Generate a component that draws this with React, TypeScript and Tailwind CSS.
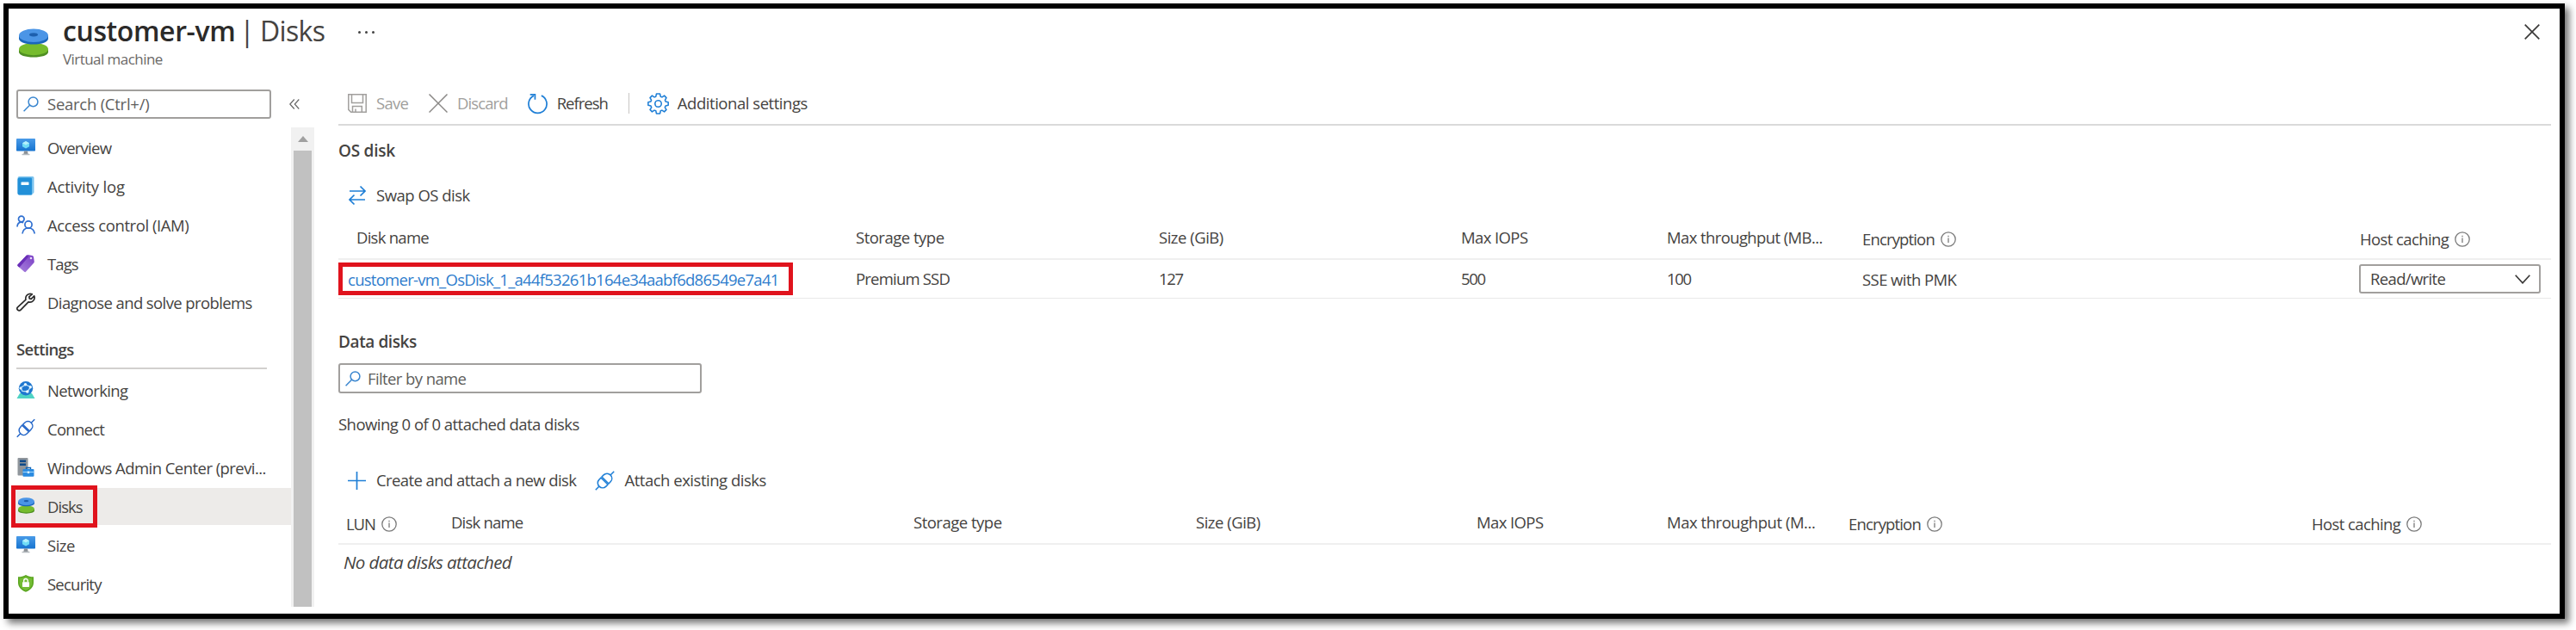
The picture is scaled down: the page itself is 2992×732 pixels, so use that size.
import type { ReactNode } from "react";

const T = ({ c = "", children }: { c?: string; children: ReactNode }) => (
  <span className={`whitespace-nowrap ${c}`}>{children}</span>
);

const DisksIcon = ({ c }: { c: string }) => (
  <svg viewBox="0 0 34 34" className={c} fill="none">
    <path d="M0 24.5v3C0 31.200 7.600 33.500 17 33.500s17-2.300 17-6v-3z" fill="#4f8f22" />
    <ellipse cx="17" cy="24" rx="17" ry="7.200" fill="#76bc2d" />
    <path d="M0 8.500v3.500c0 3.800 7.600 6.500 17 6.500s17-2.700 17-6.500V8.500z" fill="#1a66bb" />
    <ellipse cx="17" cy="8.300" rx="17" ry="7.800" fill="#4b95e6" />
    <ellipse cx="17" cy="7.300" rx="5" ry="2.100" fill="#1d5fae" />
  </svg>
);

const MonitorIcon = () => (
  <svg viewBox="0 0 22 20" className="h-5 w-[22px]">
    <defs>
      <linearGradient id="mon" x1="0" y1="0" x2="0" y2="1">
        <stop offset="0" stopColor="#4a9be8" />
        <stop offset="1" stopColor="#1673cf" />
      </linearGradient>
    </defs>
    <rect width="22" height="14.500" rx="0.800" fill="url(#mon)" />
    <path d="M9 14.500h4l.6 3.500H8.400z" fill="#8b9096" />
    <rect x="6.500" y="17.700" width="9" height="1.500" rx="0.500" fill="#b5babf" />
    <path d="M11 3l4 2.200v4L11 11.500 7 9.200v-4z" fill="#6fdcf6" />
    <path d="M11 3l4 2.200L11 7.400 7 5.200z" fill="#b5f0fc" />
  </svg>
);

const LogIcon = () => (
  <svg viewBox="0 0 20 22" className="h-[22px] w-5">
    <path d="M2.500 0H18a1.500 1.500 0 0 1 1.500 1.500v17L17 21.500H2.500A2 2 0 0 1 .5 19.500V2a2 2 0 0 1 2-2z" fill="#7cc3ee" />
    <path d="M2.500 1.500H16a1 1 0 0 1 1 1V20.500a1 1 0 0 1-1 1H2.500a2 2 0 0 1-2-2V3.500a2 2 0 0 1 2-2z" fill="#2290d8" />
    <rect x="4.500" y="6.500" width="9" height="3.500" rx="0.600" fill="#f2fbff" />
  </svg>
);

const PeopleIcon = () => (
  <svg viewBox="0 0 22 22" className="h-[22px] w-[22px]" fill="none" stroke="#2f6fd0" strokeWidth="1.700">
    <circle cx="5.800" cy="4.500" r="3.300" />
    <path d="M1 13.500c.2-3.400 2-5.300 4.800-5.300 1 0 1.600.2 2.300.6" />
    <circle cx="14" cy="11" r="4.100" />
    <path d="M7 21.500c.5-4 3-6.500 7-6.500s6.700 2.500 7.200 6.500" />
  </svg>
);

const TagIcon = () => (
  <svg viewBox="0 0 20 22" className="h-[22px] w-5">
    <defs>
      <linearGradient id="tag" x1="1" y1="0" x2="0" y2="1">
        <stop offset="0" stopColor="#7a3fc4" />
        <stop offset="1" stopColor="#a983de" />
      </linearGradient>
    </defs>
    <path d="M11 1.600c.4-.4 1-.6 1.500-.6L17.500 2A2 2 0 0 1 19 3.500l.8 5.300c.1.600-.1 1.200-.5 1.600L10.200 20.600a1.400 1.400 0 0 1-2 .1L.8 14.300a1.400 1.400 0 0 1-.1-2z" fill="url(#tag)" />
    <path d="M11 1.600L.7 12.300a1.400 1.400 0 0 0 .1 2l1.700 1.500L13.500 3z" fill="#6a2fb8" />
    <circle cx="16" cy="5" r="1.300" fill="#e9dcfa" />
  </svg>
);

const WrenchIcon = () => (
  <svg viewBox="0 0 22 22" className="h-[22px] w-[22px]" fill="none" stroke="#2b2b2b" strokeWidth="1.700" strokeLinejoin="round">
    <path d="M18.300 1.800a5.400 5.400 0 0 0-7.300 6.400L1.600 16.800a2.400 2.400 0 0 0 3.400 3.400l9-9.300a5.400 5.400 0 0 0 6.700-7.100l-3.500 3.500-2-.4-.4-2z" />
  </svg>
);

const NetIcon = () => (
  <svg viewBox="0 0 22 20" className="h-5 w-[22px]">
    <path d="M4 14h14l3.500 6H.5z" fill="#4fd3c4" />
    <circle cx="11" cy="8.200" r="8.200" fill="#1f77cf" />
    <path d="M5 7.500L10.500 4l6 2.500-3.500 5.500-6-.5z" fill="none" stroke="#bfe4fb" strokeWidth="1.300" />
    <circle cx="10.500" cy="3.800" r="1.700" fill="#e8f7ff" />
    <circle cx="5" cy="8" r="1.600" fill="#e8f7ff" />
    <circle cx="16.300" cy="6.800" r="1.700" fill="#e8f7ff" />
    <circle cx="12.800" cy="12" r="1.800" fill="#e8f7ff" />
  </svg>
);

const PlugIcon = ({ s }: { s: string }) => (
  <svg viewBox="0 0 24 24" className="h-[23px] w-[23px]" fill="none" stroke={s} strokeWidth="1.600" strokeLinejoin="round">
    <path d="M.8 23.200l4.400-4.400M18.800 5.200L23.200.8" />
    <path d="M7.300 8.300l8.400 8.400-2.200 2.200c-2.500 2.500-6 2.300-8.300 0s-2.500-5.800 0-8.300z" />
    <path d="M16.700 15.700L8.300 7.300l2.200-2.200c2.500-2.500 6-2.300 8.300 0s2.500 5.800 0 8.300z" />
  </svg>
);

const AdminIcon = () => (
  <svg viewBox="0 0 20 22" className="h-[22px] w-5">
    <rect x="0.500" y="0" width="12" height="20.500" rx="1" fill="#8f959b" />
    <rect x="3" y="2.500" width="7" height="2.500" fill="#0f4a8a" />
    <rect x="3" y="6.500" width="7" height="2.500" fill="#0f4a8a" />
    <path d="M10.500 13v-1.500h5V13" fill="none" stroke="#1565b5" strokeWidth="1.400" />
    <rect x="6.500" y="13" width="13" height="8.800" rx="1" fill="#2a8ae0" />
    <path d="M6.500 16.500h13" stroke="#9ad2fa" strokeWidth="1.200" />
    <rect x="11.800" y="15.500" width="2.400" height="2.600" fill="#d6efff" />
  </svg>
);

const ShieldIcon = () => (
  <svg viewBox="0 0 18 20" className="h-5 w-[18px]">
    <path d="M9 0c2.500 1.700 5.300 2.300 9 2.300V9c0 5-3.700 8.600-9 10.800C3.700 17.600 0 14 0 9V2.300C3.700 2.300 6.500 1.700 9 0z" fill="#5aa51f" />
    <path d="M9 1.800c2.200 1.300 4.600 1.900 7.500 2V9c0 4-2.800 7-7.500 9.200C4.300 16 1.500 13 1.500 9V3.800c2.900-.1 5.300-.7 7.500-2z" fill="#74bd35" />
    <path d="M6.700 8.500V6.800a2.300 2.300 0 0 1 4.600 0v1.700" fill="none" stroke="#fff" strokeWidth="1.400" />
    <rect x="5" y="8.200" width="8" height="5.800" rx="0.700" fill="#fff" />
  </svg>
);

const SearchIcon = () => (
  <svg viewBox="0 0 18 18" className="h-[18px] w-[18px] shrink-0" fill="none" stroke="#3a86cf" strokeWidth="1.500">
    <circle cx="11.500" cy="6.300" r="5.400" />
    <path d="M7.500 10.300L.6 17.300" />
  </svg>
);

const Info = () => (
  <svg viewBox="0 0 18 18" className="h-[18px] w-[18px] shrink-0" fill="none" stroke="#7a7a7a">
    <circle cx="9" cy="9" r="8.200" strokeWidth="1.300" />
    <path d="M9 7.500v5.500M9 4.800v1.500" strokeWidth="1.300" />
  </svg>
);

const Item = ({ icon, label, c, sel }: { icon: ReactNode; label: string; c: string; sel?: boolean }) => (
  <div className={`flex h-[45px] w-[328px] items-center py-[1px] pl-[3px] ${sel ? "relative" : ""}`}>
    <div className={`flex h-[43px] w-full items-center pl-[6px] ${sel ? "bg-[#edebe9]" : ""}`}>
      <span className="mb-[2px] flex w-[22px] justify-center">{icon}</span>
      <T c={`ml-[14px] ${c}`}>{label}</T>
    </div>
    {sel && <div className="absolute top-[-2px] left-[3px] h-[49px] w-[100px] border-[5px] border-[#e0131d]" />}
  </div>
);

const Hd = ({ c, children }: { c: string; children: ReactNode }) => (
  <div className="flex items-center gap-[7px] pt-[4px]">
    <T c={c}>{children}</T>
    <Info />
  </div>
);

export default function App() {
  return (
    <div className="h-[732px] w-[2992px] overflow-hidden bg-white p-1 font-['Open_Sans','Noto_Sans',sans-serif] text-[18.5px] leading-[30px] text-[#454341]">
      <div className="flex h-[715px] w-[2975px] flex-col border-[6px] border-black bg-white shadow-[5px_5px_8px_rgba(0,0,0,0.55)]">
        <header className="flex h-[88px] shrink-0 items-start pt-[3px] pr-[23px] pl-3">
          <DisksIcon c="mt-5 h-[34px] w-[34px]" />
          <div className="ml-[17px] flex flex-col">
            <div className="flex h-11 items-center pt-[1px] text-[32px] leading-[44px]">
              <T c="font-semibold tracking-[-0.4px] text-[#2b2a29]">customer-vm</T>
              <T c="ml-[5px]">|</T>
              <T c="ml-[6px] tracking-[-0.6px]">Disks</T>
              <span className="mt-[4px] ml-[38px] flex gap-[5px]">
                <i className="h-[3px] w-[3px] rounded-full bg-[#444]" />
                <i className="h-[3px] w-[3px] rounded-full bg-[#444]" />
                <i className="h-[3px] w-[3px] rounded-full bg-[#444]" />
              </span>
            </div>
            <T c="text-[17px] leading-[24px] tracking-[-0.55px] text-[#6b6967]">Virtual machine</T>
          </div>
          <svg viewBox="0 0 18 18" className="mt-[15px] ml-auto h-[18px] w-[18px]" stroke="#3b3a39" strokeWidth="1.700">
            <path d="M.7.7l16.600 16.600M17.300.7L.7 17.300" />
          </svg>
        </header>

        <div className="flex flex-1">
          <aside className="w-[355px] shrink-0">
            <div className="flex h-[50px] items-start pt-[6px] pl-[9px]">
              <div className="flex h-[34px] w-[296px] items-center rounded-[3px] border-2 border-[#a19f9d] pl-[6px] text-[#605e5c]">
                <SearchIcon />
                <T c="ml-[10px] tracking-[-0.25px]">Search (Ctrl+/)</T>
              </div>
              <svg viewBox="0 0 12 12" className="mt-[11px] ml-[21px] h-3 w-3" fill="none" stroke="#666" strokeWidth="1.200">
                <path d="M5.800.5L.8 6l5 5.500M11.300.5l-5 5.500 5 5.500" />
              </svg>
            </div>
            <div className="flex">
              <nav className="h-[565px] w-[328px] pt-[1px]">
                <Item icon={<MonitorIcon />} label="Overview" c="tracking-[-0.74px]" />
                <Item icon={<LogIcon />} label="Activity log" c="tracking-[-0.21px]" />
                <Item icon={<PeopleIcon />} label="Access control (IAM)" c="tracking-[-0.42px]" />
                <Item icon={<TagIcon />} label="Tags" c="tracking-[-0.9px]" />
                <Item icon={<WrenchIcon />} label="Diagnose and solve problems" c="tracking-[-0.6px]" />
                <div className="flex h-[57px] flex-col pt-[17px] pl-[9px]">
                  <T c="h-[38px] w-[291px] border-b-2 border-[#d2d0ce] font-semibold tracking-[-0.63px]">Settings</T>
                </div>
                <Item icon={<NetIcon />} label="Networking" c="tracking-[-0.63px]" />
                <Item icon={<PlugIcon s="#2567c9" />} label="Connect" c="tracking-[-0.73px]" />
                <Item icon={<AdminIcon />} label="Windows Admin Center (previ..." c="tracking-[-0.55px]" />
                <Item icon={<DisksIcon c="h-[19px] w-[19px]" />} label="Disks" c="tracking-[-0.95px]" sel />
                <Item icon={<MonitorIcon />} label="Size" c="tracking-[-0.5px]" />
                <Item icon={<ShieldIcon />} label="Security" c="tracking-[-0.77px]" />
              </nav>
              <div className="flex h-[557px] w-[27px] flex-col items-center bg-[#f1f1f1]">
                <svg viewBox="0 0 12 7" className="my-[10px] h-[7px] w-3 shrink-0">
                  <path d="M6 0l6 7H0z" fill="#a0a0a0" />
                </svg>
                <div className="w-[21px] flex-1 bg-[#c1c1c1]" />
              </div>
            </div>
          </aside>

          <main className="ml-7 w-[2570px]">
            <div className="flex h-12 items-center border-b-2 border-[#dadada] pb-[2px] pl-[11px]">
              <svg viewBox="0 0 22 22" className="h-[22px] w-[22px]" fill="none" stroke="#a19f9d" strokeWidth="1.500">
                <path d="M.8.8h20.400v20.400H3.600L.8 18.400zM4.500.8v9.700h13V.8M5.500 21v-6.500h10.800V21M9 21v-3.500" />
              </svg>
              <T c="ml-[11px] tracking-[-0.75px] text-[#a19f9d]">Save</T>
              <svg viewBox="0 0 22 22" className="ml-[24px] h-[22px] w-[22px]" stroke="#8a8886" strokeWidth="1.500">
                <path d="M.5.500l21 21M21.500.5l-21 21" />
              </svg>
              <T c="ml-[11px] tracking-[-0.9px] text-[#a19f9d]">Discard</T>
              <svg viewBox="0 0 24 26" className="ml-[23px] h-[25px] w-[23px]" fill="none" stroke="#1f7fd6" strokeWidth="1.800">
                <path d="M16.500 3.200A11 11 0 1 1 7.300 3.300" />
                <path d="M2.800 2h6v6" />
              </svg>
              <T c="ml-[11px] tracking-[-1px]">Refresh</T>
              <div className="ml-[24px] h-6 w-px bg-[#c8c6c4]" />
              <svg viewBox="0 0 24 24" className="ml-[21px] h-[25px] w-[25px]" fill="none" stroke="#1f7fd6" strokeWidth="1.500" strokeLinejoin="round">
                <circle cx="12" cy="12" r="3.600" />
                <path d="M10 1h4l.6 3 1.700.7 2.500-1.700 2.300 2.400-1.500 2.600.6 1.700 3 .6v3.400l-3 .7-.7 1.800 1.600 2.400-2.300 2.400-2.600-1.700-1.600.7L14 23h-4l-.6-3-1.700-.7L5.200 21l-2.300-2.400 1.600-2.400-.7-1.800-3-.7v-3.400l3-.6.6-1.700L2.900 5.400 5.200 3l2.500 1.700L9.400 4z" />
              </svg>
              <T c="ml-[10px] tracking-[-0.46px]">Additional settings</T>
            </div>

            <div className="flex h-[57px] items-center">
              <T c="text-[19px] font-semibold tracking-[-0.25px]">OS disk</T>
            </div>
            <div className="flex h-12 items-center pl-3">
              <svg viewBox="0 0 20 24" className="h-6 w-5" fill="none" stroke="#1f7fd6" strokeWidth="1.700">
                <path d="M1 7h18M13.500 1.500L19 7l-5.500 5.500M19 17H1M6.500 11.500L1 17l5.500 5.500" />
              </svg>
              <T c="ml-3 tracking-[-0.5px]">Swap OS disk</T>
            </div>
            <div className="grid h-[51px] grid-cols-[601px_352px_351px_239px_227px_578px_221px] items-center border-b-2 border-[#efefef]">
              <T c="ml-[21px] tracking-[-0.74px]">Disk name</T>
              <T c="tracking-[-0.5px]">Storage type</T>
              <T c="tracking-[-0.49px]">Size (GiB)</T>
              <T c="tracking-[-0.6px]">Max IOPS</T>
              <T c="tracking-[-0.61px]">Max throughput (MB...</T>
              <Hd c="tracking-[-0.85px]">Encryption</Hd>
              <Hd c="tracking-[-0.6px]">Host caching</Hd>
            </div>
            <div className="grid h-[45px] grid-cols-[601px_352px_351px_239px_227px_577px_222px] items-center border-b border-[#e8e8e8]">
              <div className="flex h-[38px] w-[528px] items-center border-[5px] border-[#e0131d] pt-[1px] pl-[6px]">
                <T c="tracking-[-0.73px] text-[#2f7dcd]">customer-vm_OsDisk_1_a44f53261b164e34aabf6d86549e7a41</T>
              </div>
              <T c="pb-[1px] tracking-[-0.8px]">Premium SSD</T>
              <T c="pb-[1px] tracking-[-1.3px]">127</T>
              <T c="pb-[1px] tracking-[-1.3px]">500</T>
              <T c="pb-[1px] tracking-[-1.3px]">100</T>
              <T c="pt-[2px] tracking-[-0.58px]">SSE with PMK</T>
              <div className="flex h-[34px] w-[211px] items-center justify-between rounded-[3px] border-2 border-[#a19f9d] pr-[10px] pl-[11px]">
                <T c="tracking-[-0.65px]">Read/write</T>
                <svg viewBox="0 0 18 11" className="h-[11px] w-[18px]" fill="none" stroke="#3b3a39" strokeWidth="1.700">
                  <path d="M.7.700L9 9.800 17.300.7" />
                </svg>
              </div>
            </div>

            <div className="mt-[35px] flex h-[30px] items-center">
              <T c="text-[19px] font-semibold tracking-[-0.4px]">Data disks</T>
            </div>
            <div className="mt-[10px] flex h-[35px] w-[422px] items-center rounded-[3px] border-2 border-[#a19f9d] pl-[6px] text-[#605e5c]">
              <SearchIcon />
              <T c="ml-[8px] tracking-[-0.6px]">Filter by name</T>
            </div>
            <div className="mt-[21px] flex h-[30px] items-center">
              <T c="tracking-[-0.53px]">Showing 0 of 0 attached data disks</T>
            </div>
            <div className="mt-[35px] flex h-[30px] items-center pl-[11px]">
              <svg viewBox="0 0 21 21" className="h-[21px] w-[21px]" stroke="#1f7fd6" strokeWidth="1.700">
                <path d="M10.500 0v21M0 10.500h21" />
              </svg>
              <T c="ml-3 tracking-[-0.58px]">Create and attach a new disk</T>
              <span className="ml-[22px]"><PlugIcon s="#1f7fd6" /></span>
              <T c="ml-[11px] tracking-[-0.48px]">Attach existing disks</T>
            </div>
            <div className="mt-[9px] grid h-[51px] grid-cols-[131px_537px_328px_326px_221px_211px_538px_278px] items-center border-b-2 border-[#efefef]">
              <div className="pl-[9px]"><Hd c="tracking-[-1.1px]">LUN</Hd></div>
              <T c="tracking-[-0.8px]">Disk name</T>
              <T c="tracking-[-0.5px]">Storage type</T>
              <T c="tracking-[-0.49px]">Size (GiB)</T>
              <T c="tracking-[-0.6px]">Max IOPS</T>
              <T c="tracking-[-0.46px]">Max throughput (M...</T>
              <Hd c="tracking-[-0.85px]">Encryption</Hd>
              <Hd c="tracking-[-0.6px]">Host caching</Hd>
            </div>
            <div className="flex h-[40px] items-center pl-[6px]">
              <T c="text-[20.5px] italic tracking-[-0.6px]">No data disks attached</T>
            </div>
          </main>
        </div>
      </div>
    </div>
  );
}
